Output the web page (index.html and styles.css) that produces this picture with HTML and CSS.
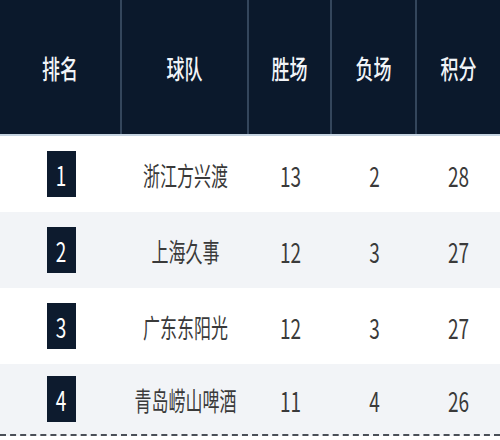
FILE: index.html
```html
<!DOCTYPE html>
<html lang="zh">
<head>
<meta charset="utf-8">
<link rel="stylesheet" href="styles.css">
</head>
<body>
<div class="table">
  <div class="row head">
    <div class="cell"><span class="t">排名</span></div>
    <div class="cell"><span class="t">球队</span></div>
    <div class="cell"><span class="t">胜场</span></div>
    <div class="cell"><span class="t">负场</span></div>
    <div class="cell"><span class="t">积分</span></div>
  </div>
  <div class="row">
    <div class="cell"><span class="badge"><span class="t">1</span></span></div>
    <div class="cell"><span class="t">浙江方兴渡</span></div>
    <div class="cell"><span class="t num">13</span></div>
    <div class="cell"><span class="t num">2</span></div>
    <div class="cell"><span class="t num">28</span></div>
  </div>
  <div class="row alt">
    <div class="cell"><span class="badge"><span class="t">2</span></span></div>
    <div class="cell"><span class="t">上海久事</span></div>
    <div class="cell"><span class="t num">12</span></div>
    <div class="cell"><span class="t num">3</span></div>
    <div class="cell"><span class="t num">27</span></div>
  </div>
  <div class="row">
    <div class="cell"><span class="badge"><span class="t">3</span></span></div>
    <div class="cell"><span class="t">广东东阳光</span></div>
    <div class="cell"><span class="t num">12</span></div>
    <div class="cell"><span class="t num">3</span></div>
    <div class="cell"><span class="t num">27</span></div>
  </div>
  <div class="row alt last">
    <div class="cell"><span class="badge"><span class="t">4</span></span></div>
    <div class="cell"><span class="t">青岛崂山啤酒</span></div>
    <div class="cell"><span class="t num">11</span></div>
    <div class="cell"><span class="t num">4</span></div>
    <div class="cell"><span class="t num">26</span></div>
  </div>
</div>
</body>
</html>
```

FILE: styles.css
```css
html, body {
  margin: 0;
  padding: 0;
  background: #ffffff;
}
body {
  width: 500px;
  height: 440px;
  overflow: hidden;
  font-family: "Noto Sans CJK SC", "Noto Sans", sans-serif;
}
.table {
  display: flex;
  flex-direction: column;
}
.row {
  display: grid;
  grid-template-columns: 122px 127px 83px 85px 83px;
  height: 76px;
  background: #ffffff;
  color: #3a3a3a;
}
.row.alt {
  background: #f2f4f7;
}
.row.last {
  height: 70px;
  border-bottom: 2px dashed #4a4f57;
}
.cell {
  display: flex;
  align-items: center;
  justify-content: center;
}
.t {
  display: inline-block;
  font-size: 17px;
  line-height: 1;
  transform: scaleY(1.55);
}
.t.num {
  font-size: 19px;
  transform: scaleY(1.45);
}
.head {
  height: 134px;
  background: #0b192c;
  border-bottom: 2px solid #c5d3e0;
  color: #f1f4f8;
}
.head .cell {
  border-right: 2px solid #34465c;
}
.head .cell:last-child {
  border-right: none;
}
.head .t {
  font-size: 18px;
  font-weight: 500;
  transform: scaleY(1.45);
}
.badge {
  width: 29px;
  height: 46px;
  background: #0d1b2e;
  color: #ffffff;
  display: flex;
  align-items: center;
  justify-content: center;
}
.badge .t {
  font-size: 19px;
  transform: scaleY(1.4);
}
```
